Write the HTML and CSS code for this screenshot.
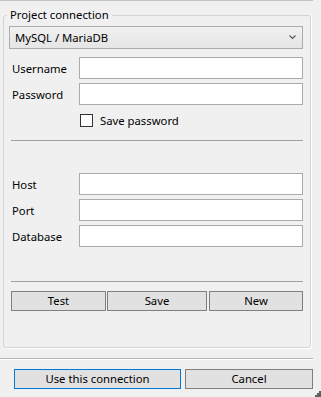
FILE: index.html
```html
<!DOCTYPE html>
<html lang="en">
<head>
  <meta charset="UTF-8" />
  <meta name="viewport" content="width=device-width, initial-scale=1.0"/>
  <title>Project connection</title>
  <link rel="stylesheet" href="styles.css">
</head>
<body>

  <div class="dialog">
    <div class="content">
      <fieldset class="group">
        <legend>Project connection</legend>

        <div class="combo">
          <span>MySQL / MariaDB</span>
          <svg width="7" height="5" viewBox="0 0 7 5">
            <polyline points="0.5,0.5 3.5,3.5 6.5,0.5" fill="none" stroke="#5a5a5a" stroke-width="1.2"/>
          </svg>
        </div>

        <div class="form">
          <label>Username</label>
          <input type="text">
          <label>Password</label>
          <input type="password">
        </div>

        <label class="check">
          <span class="box"></span>
          Save password
        </label>

        <div class="sep"></div>

        <div class="form server">
          <label>Host</label>
          <input type="text">
          <label>Port</label>
          <input type="text">
          <label>Database</label>
          <input type="text">
        </div>

        <div class="sep sep-bottom"></div>

        <div class="actions">
          <button class="btn test">Test</button>
          <button class="btn save">Save</button>
          <button class="btn new">New</button>
        </div>
      </fieldset>
    </div>

    <div class="footer">
      <button class="btn use">Use this connection</button>
      <button class="btn cancel">Cancel</button>
    </div>

    <!-- resize grip -->
    <svg class="grip" width="6" height="6" viewBox="0 0 6 6">
      <rect x="4" y="0" width="2" height="2" fill="#606060"/>
      <rect x="2" y="2" width="2" height="2" fill="#606060"/>
      <rect x="4" y="2" width="2" height="2" fill="#606060"/>
      <rect x="0" y="4" width="2" height="2" fill="#606060"/>
      <rect x="2" y="4" width="2" height="2" fill="#606060"/>
      <rect x="4" y="4" width="2" height="2" fill="#606060"/>
    </svg>
  </div>

</body>
</html>
```

FILE: styles.css
```css
body {
  margin: 0;
  background-color: #f0f0f0;
  font-family: "Noto Sans", sans-serif;
  font-size: 11.3px;
  color: #000;
}

.dialog {
  position: relative;
  width: 321px;
  height: 397px;
  overflow: hidden;
}

.content {
  width: 313px;
  box-sizing: border-box;
  padding: 0 2px 10px 3px;
  border-top: 1px solid #c4c4c4;
  border-bottom: 1px solid #b4b4b4;
  box-shadow: 0 1px 0 #fff;
}

.group {
  margin: 7px 0 0 0;
  width: 308px;
  box-sizing: border-box;
  padding: 4px 7px 36px 5px;
  border: 1px solid #d3d3d3;
  border-radius: 3px;
  box-shadow: 1px 1px 0 #fff;
}

.group legend {
  margin-left: -2px;
  padding: 0 3px;
  line-height: 14px;
}

.combo {
  height: 23px;
  box-sizing: border-box;
  border: 1px solid #acacac;
  background: linear-gradient(#f0f0f0, #e5e5e5);
  display: flex;
  align-items: center;
  justify-content: space-between;
  padding: 0 6px 0 5px;
}

.form {
  display: grid;
  grid-template-columns: 70px 1fr;
  grid-auto-rows: 22px;
  row-gap: 4px;
  align-items: center;
  margin-top: 8px;
}

.form label {
  padding-left: 3px;
}

.form input {
  height: 22px;
  width: 100%;
  box-sizing: border-box;
  margin: 0;
  border: 1px solid #ababab;
  background: #fff;
  font: inherit;
  padding: 0 3px;
}

.check {
  display: flex;
  align-items: center;
  gap: 7px;
  height: 13px;
  margin: 9px 0 0 71px;
}

.check .box {
  width: 13px;
  height: 13px;
  box-sizing: border-box;
  border: 1px solid #333;
  background: #fff;
}

.sep {
  margin: 13px 0 0 2px;
  height: 1px;
  background: #a0a0a0;
}

.server {
  margin-top: 32px;
}

.sep-bottom {
  margin-top: 34px;
}

.actions {
  display: flex;
  margin: 9px 0 0 2px;
}

.btn {
  height: 20px;
  box-sizing: border-box;
  margin: 0;
  padding: 0;
  border: 1px solid #7f7f7f;
  background: #e1e1e1;
  font: inherit;
  color: #000;
  line-height: 16px;
}

.test {
  width: 95px;
}

.save {
  width: 100px;
  margin-left: 1px;
}

.new {
  width: 94px;
  margin-left: 2px;
}

.footer {
  display: flex;
  gap: 4px;
  padding: 10px 0 0 14px;
}

.use {
  width: 167px;
  border-color: #0078d7;
}

.cancel {
  width: 128px;
}

.grip {
  position: absolute;
  right: 0;
  bottom: 0;
}
```
